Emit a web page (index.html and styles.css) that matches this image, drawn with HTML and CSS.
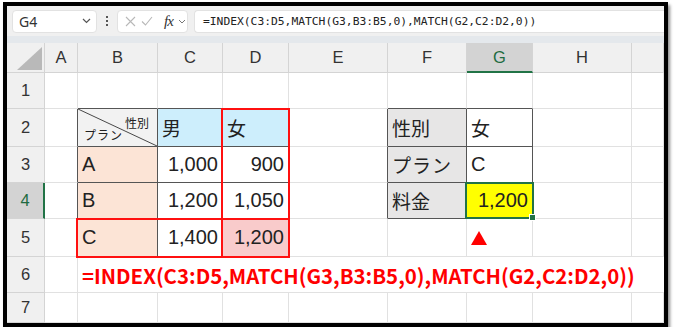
FILE: index.html
```html
<!DOCTYPE html>
<html lang="ja">
<head>
<meta charset="utf-8">
<title>INDEX MATCH</title>
<link rel="stylesheet" href="styles.css">
</head>
<body>
<div class="frame">
  <div class="toolbar">
    <div class="namebox"><span class="name">G4</span><svg class="chev" width="9" height="6" viewBox="0 0 9 6"><path d="M1 1l3.5 3.5L8 1" fill="none" stroke="#555" stroke-width="1.2"/></svg></div>
    <div class="dots"><i></i><i></i><i></i></div>
    <div class="fxbox">
      <svg width="11" height="11" viewBox="0 0 11 11"><path d="M1 1l9 9M10 1l-9 9" stroke="#b8b8b8" stroke-width="1.1"/></svg>
      <svg width="12" height="10" viewBox="0 0 12 10"><path d="M1 5.5l3.5 3.5L11 1" fill="none" stroke="#b8b8b8" stroke-width="1.1"/></svg>
      <span class="fx">fx</span>
      <svg width="8" height="5" viewBox="0 0 8 5"><path d="M1 1l3 3 3-3" fill="none" stroke="#777" stroke-width="1"/></svg>
    </div>
    <div class="formula">=INDEX(C3:D5,MATCH(G3,B3:B5,0),MATCH(G2,C2:D2,0))</div>
  </div>
  <div class="sheet">
    <!-- header row -->
    <div class="hd corner"><span class="tri"></span></div>
    <div class="hd">A</div><div class="hd">B</div><div class="hd">C</div><div class="hd">D</div>
    <div class="hd">E</div><div class="hd">F</div><div class="hd hsel-col">G</div><div class="hd">H</div><div class="hd"></div>
    <!-- row 1 -->
    <div class="hd rh">1</div>
    <div class="c"></div><div class="c bb"></div><div class="c bb"></div><div class="c bb"></div>
    <div class="c"></div><div class="c bb"></div><div class="c bb"></div><div class="c"></div><div class="c"></div>
    <!-- row 2 -->
    <div class="hd rh">2</div>
    <div class="c rb"></div>
    <div class="c rb bb diag"><svg class="dline" viewBox="0 0 80 38" preserveAspectRatio="none"><line x1="0" y1="0" x2="80" y2="38" stroke="#444" stroke-width="1"/></svg><span class="d-top">性別</span><span class="d-bot">プラン</span></div>
    <div class="c rb bb blue jp">男</div>
    <div class="c rb bb blue jp">女</div>
    <div class="c rb"></div>
    <div class="c rb bb grey jp">性別</div>
    <div class="c rb bb jp">女</div>
    <div class="c"></div><div class="c"></div>
    <!-- row 3 -->
    <div class="hd rh">3</div>
    <div class="c rb"></div>
    <div class="c rb bb peach">A</div>
    <div class="c rb bb num">1,000</div>
    <div class="c rb bb num">900</div>
    <div class="c rb"></div>
    <div class="c rb bb grey jp wide">プラン</div>
    <div class="c rb bb">C</div>
    <div class="c"></div><div class="c"></div>
    <!-- row 4 -->
    <div class="hd rh hsel-row">4</div>
    <div class="c rb"></div>
    <div class="c rb bb peach">B</div>
    <div class="c rb bb num">1,200</div>
    <div class="c rb bb num">1,050</div>
    <div class="c rb"></div>
    <div class="c rb bb grey jp">料金</div>
    <div class="c rb bb num yellow">1,200</div>
    <div class="c"></div><div class="c"></div>
    <!-- row 5 -->
    <div class="hd rh">5</div>
    <div class="c rb"></div>
    <div class="c rb bb peach">C</div>
    <div class="c rb bb num">1,400</div>
    <div class="c rb bb num pink">1,200</div>
    <div class="c"></div><div class="c"></div>
    <div class="c arrow-cell"><span class="arrow"></span></div>
    <div class="c"></div><div class="c"></div>
    <!-- row 6 -->
    <div class="hd rh">6</div>
    <div class="c"></div>
    <div class="c big">=INDEX(C3:D5,MATCH(G3,B3:B5,0),MATCH(G2,C2:D2,0))</div>
    <!-- row 7 -->
    <div class="hd rh">7</div>
    <div class="c"></div><div class="c"></div><div class="c"></div><div class="c"></div>
    <div class="c"></div><div class="c"></div><div class="c"></div><div class="c"></div><div class="c"></div>
    <!-- overlays -->
    <div class="redbox col-d"></div>
    <div class="redbox row-5"></div>
    <div class="selbox"><span class="handle"></span></div>
  </div>
</div>
</body>
</html>
```
FILE: styles.css
```css
html, body { margin: 0; padding: 0; background: #fff; }
body { padding: 2px 0 0 3px; }
.frame {
  width: 657px;
  height: 317px;
  border: 4px solid #000;
  box-shadow: 2px 3px 3px rgba(0,0,0,0.45);
  overflow: hidden;
  background: #fff;
  font-family: "Liberation Sans", "Noto Sans CJK JP", sans-serif;
}
.toolbar {
  height: 37px;
  box-sizing: border-box;
  background: #f0f0f0;
  border-bottom: 7px solid #e4e8ec;
  display: flex;
  align-items: center;
  padding: 0 0 0 5px;
}
.namebox {
  width: 85px; height: 23px; box-sizing: border-box;
  background: #fff; border: 1px solid #e2e2e2; border-radius: 4px;
  display: flex; align-items: center; justify-content: space-between;
  padding: 0 5px 0 6px;
}
.name { font-family: "Noto Sans", sans-serif; font-size: 14px; color: #333; }
.dots { width: 20px; display: flex; flex-direction: column; align-items: center; gap: 2px; }
.dots i { display: block; width: 2px; height: 2px; background: #555; }
.fxbox {
  width: 71px; height: 23px; box-sizing: border-box;
  background: #fff; border: 1px solid #e2e2e2; border-radius: 4px;
  display: flex; align-items: center; gap: 5px; padding: 0 0 0 7px;
}
.fx { font-family: "Liberation Serif", serif; font-style: italic; font-size: 15px; color: #333; margin-left: 6px; letter-spacing: -1px; }
.formula {
  flex: 1; height: 23px; margin-left: 6px;
  background: #fff; border: 1px solid #e2e2e2; border-right: 0; border-radius: 4px 0 0 4px;
  box-sizing: border-box; padding-left: 8px;
  font-family: "DejaVu Sans Mono", monospace; font-size: 11.3px; color: #222;
  display: flex; align-items: center;
}
.sheet {
  display: grid;
  grid-template-columns: 38px 33px 80px 65px 66px 99px 79px 66px 99px 1fr;
  grid-template-rows: 30px 36px 38px 36px 36px 38px 36px 1fr;
  position: relative;
  height: 280px;
}
.hd {
  background: #f0f0f0;
  border-right: 1px solid #d4d4d4;
  border-bottom: 1px solid #d4d4d4;
  box-sizing: border-box;
  display: flex; align-items: center; justify-content: center;
  font-size: 16.5px; color: #333;
}
.corner { justify-content: flex-end; align-items: flex-end; padding: 0 2px 2px 0; }
.tri { width: 0; height: 0; border-left: 25px solid transparent; border-bottom: 23px solid #b9b9b9; }
.hsel-col { background: #d3d3d3; color: #1e6b41; border-bottom: 2px solid #217346; }
.hsel-row { background: #d3d3d3; color: #1e6b41; border-right: 2px solid #217346; }
.c {
  border-right: 1px solid #e1e1e1;
  border-bottom: 1px solid #e1e1e1;
  box-sizing: border-box;
  display: flex; align-items: center;
  padding: 0 4px;
  font-size: 20px; color: #222;
  position: relative;
}
.c.rb { border-right-color: #555; }
.c.bb { border-bottom-color: #555; }
.num { justify-content: flex-end; }
.jp { font-family: "Noto Sans CJK JP", sans-serif; font-weight: 400; font-size: 19px; }
.wide { letter-spacing: 1px; }
.blue { background: #cdeefc; }
.peach { background: #fce4d6; }
.pink { background: #f9cbcb; }
.grey { background: #e7e6e6; }
.yellow { background: #ffff00; }
.diag { background: #f2f2f2; font-family: "Noto Sans CJK JP", sans-serif; font-size: 12px; overflow: hidden; }
.dline { position: absolute; left: 0; top: 0; width: 100%; height: 100%; }
.d-top { position: absolute; right: 8px; top: 5px; }
.d-bot { position: absolute; left: 6px; bottom: 3px; letter-spacing: 1px; }
.arrow-cell { align-items: flex-start; padding: 12px 0 0 4px; }
.arrow { width: 0; height: 0; border-left: 8.5px solid transparent; border-right: 8.5px solid transparent; border-bottom: 14px solid #ff0000; }
.big {
  grid-column: 3 / 11;
  grid-row: 7;
  border-right: 0;
  font-family: "Noto Sans CJK JP", sans-serif; font-weight: 700; font-size: 20.4px; color: #ff0000;
  white-space: nowrap;
}
.redbox { position: absolute; top: -1px; left: -2px; right: -1px; bottom: -1px; border: 2px solid #ff1010; z-index: 2; }
.col-d { grid-column: 5 / 6; grid-row: 3 / 7; }
.row-5 { grid-column: 3 / 6; grid-row: 6 / 7; }
.selbox { position: absolute; grid-column: 8 / 9; grid-row: 5 / 6; top: -1px; left: -2px; right: -1px; bottom: 0; border: 2px solid #217346; z-index: 3; }
.handle { position: absolute; right: -4px; bottom: -4px; width: 5px; height: 5px; background: #217346; border: 1px solid #fff; }
```
